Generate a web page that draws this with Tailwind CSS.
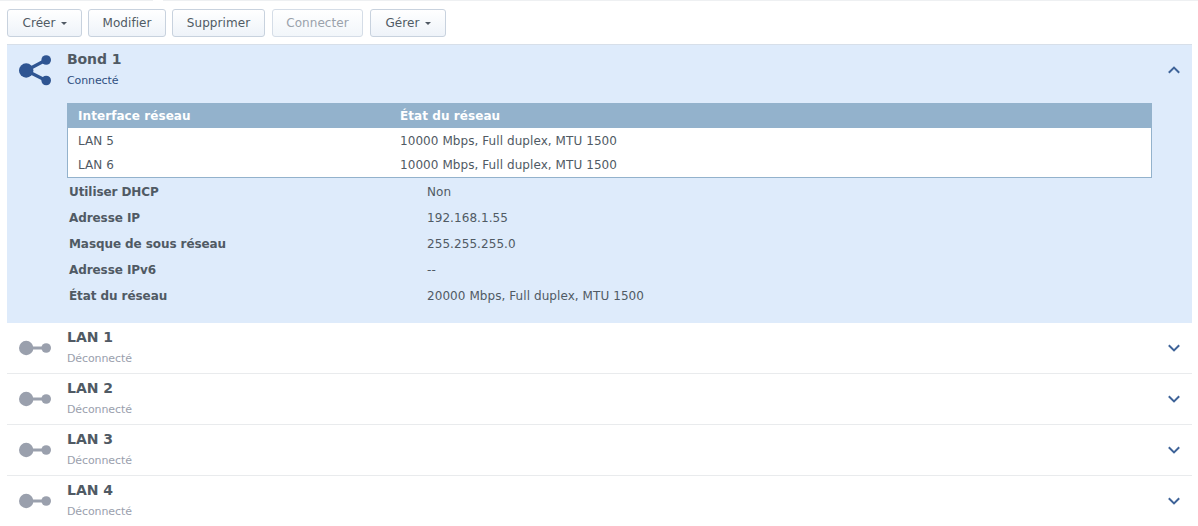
<!DOCTYPE html>
<html lang="fr">
<head>
<meta charset="UTF-8">
<title>Réseau</title>
<script src="https://cdn.jsdelivr.net/npm/@tailwindcss/browser@4"></script>
</head>
<body class="bg-white h-[526px] overflow-hidden font-['DejaVu_Sans',sans-serif] text-[12px] tracking-[0.07px] text-[#505a64]">
<div class="flex gap-[10px] h-px">
  <div class="w-[153px] bg-[#eef0f2]"></div>
  <div class="flex-1 bg-[#eef0f2]"></div>
</div>
<!-- toolbar -->
<div class="flex pl-[7px] pt-[8px] h-[43px]">
  <button class="h-[28px] w-[75px] mr-[6px] rounded-[3px] border border-[#c8d2de] bg-gradient-to-b from-white to-[#eef3f9] flex items-center justify-center gap-[5px]">Créer <span class="border-x-[3px] border-t-[3px] border-x-transparent border-t-[#505a64]"></span></button>
  <button class="h-[28px] w-[78px] mr-[6px] rounded-[3px] border border-[#c8d2de] bg-gradient-to-b from-white to-[#eef3f9]">Modifier</button>
  <button class="h-[28px] w-[93px] mr-[7px] rounded-[3px] border border-[#c8d2de] bg-gradient-to-b from-white to-[#eef3f9]">Supprimer</button>
  <button class="h-[28px] w-[91px] mr-[7px] rounded-[3px] border border-[#d5dde7] bg-gradient-to-b from-white to-[#f2f6fa] text-[#9aa2ab]">Connecter</button>
  <button class="h-[28px] w-[76px] rounded-[3px] border border-[#c8d2de] bg-gradient-to-b from-white to-[#eef3f9] flex items-center justify-center gap-[5px]">Gérer <span class="border-x-[3px] border-t-[3px] border-x-transparent border-t-[#505a64]"></span></button>
</div>
<div class="ml-[7px] mr-[6px]">
  <!-- Bond 1 -->
  <section class="bg-[#deebfb] border-t border-[#d7dfe9] h-[279px] relative pl-[60px]">
    <svg class="absolute left-[12px] top-[10px]" width="33" height="32" viewBox="0 0 33 32"><path d="M7.200 15.500 L27 5 M7.200 15.500 L27 25.500" stroke="#2f5592" stroke-width="3.2"/><circle cx="7.200" cy="15.500" r="7.200" fill="#2f5592"/><circle cx="27.200" cy="5" r="4.800" fill="#2f5592"/><circle cx="27.200" cy="25.500" r="4.800" fill="#2f5592"/></svg>
    <svg class="absolute right-[12px] top-[21px]" width="12" height="8" viewBox="0 0 12 8"><path d="M0.800 6.800 L6 1.600 L11.200 6.800" fill="none" stroke="#3e6398" stroke-width="2"/></svg>
    <h2 class="pt-[5px] h-[26px] font-bold text-[14px] leading-[18px] tracking-[-0.1px] text-[#505a64]">Bond 1</h2>
    <p class="text-[11px] leading-[14px] mt-[3px] tracking-[-0.1px] text-[#2f4f80]">Connecté</p>
    <div class="mt-[15px] w-[1085px] border border-[#93b2cc] bg-white">
      <div class="flex h-[25px] items-center bg-[#93b2cc] text-white font-bold -mt-px"><span class="pl-[10px] w-[332px]">Interface réseau</span><span>État du réseau</span></div>
      <div class="flex h-[25px] items-center"><span class="pl-[10px] w-[332px]">LAN 5</span><span>10000 Mbps, Full duplex, MTU 1500</span></div>
      <div class="flex h-[24px] items-center"><span class="pl-[10px] w-[332px]">LAN 6</span><span>10000 Mbps, Full duplex, MTU 1500</span></div>
    </div>
    <dl class="pl-[2px] pt-[1px]">
      <div class="flex h-[26px] items-center"><dt class="w-[358px] font-bold tracking-[-0.08px]">Utiliser DHCP</dt><dd>Non</dd></div>
      <div class="flex h-[26px] items-center"><dt class="w-[358px] font-bold tracking-[-0.08px]">Adresse IP</dt><dd>192.168.1.55</dd></div>
      <div class="flex h-[26px] items-center"><dt class="w-[358px] font-bold tracking-[-0.08px]">Masque de sous réseau</dt><dd>255.255.255.0</dd></div>
      <div class="flex h-[26px] items-center"><dt class="w-[358px] font-bold tracking-[-0.08px]">Adresse IPv6</dt><dd>--</dd></div>
      <div class="flex h-[26px] items-center"><dt class="w-[358px] font-bold tracking-[-0.08px]">État du réseau</dt><dd>20000 Mbps, Full duplex, MTU 1500</dd></div>
    </dl>
  </section>
  <!-- LAN rows -->
  <section class="h-[51px] border-b border-[#e9ebed] relative pl-[60px]">
    <svg class="absolute left-[12px] top-[17px]" width="33" height="16" viewBox="0 0 33 16"><path d="M7 8 H27" stroke="#9aa0ad" stroke-width="3"/><circle cx="7.200" cy="8" r="7.200" fill="#9aa0ad"/><circle cx="27.200" cy="8" r="4.800" fill="#9aa0ad"/></svg>
    <svg class="absolute right-[12px] top-[21px]" width="12" height="8" viewBox="0 0 12 8"><path d="M0.800 1.200 L6 6.400 L11.200 1.200" fill="none" stroke="#3e6398" stroke-width="2"/></svg>
    <h2 class="pt-[5px] h-[26px] font-bold text-[14px] leading-[18px] tracking-normal">LAN 1</h2>
    <p class="text-[11px] leading-[14px] mt-[3px] tracking-[-0.1px] text-[#9aa0ad]">Déconnecté</p>
  </section>
  <section class="h-[51px] border-b border-[#e9ebed] relative pl-[60px]">
    <svg class="absolute left-[12px] top-[17px]" width="33" height="16" viewBox="0 0 33 16"><path d="M7 8 H27" stroke="#9aa0ad" stroke-width="3"/><circle cx="7.200" cy="8" r="7.200" fill="#9aa0ad"/><circle cx="27.200" cy="8" r="4.800" fill="#9aa0ad"/></svg>
    <svg class="absolute right-[12px] top-[21px]" width="12" height="8" viewBox="0 0 12 8"><path d="M0.800 1.200 L6 6.400 L11.200 1.200" fill="none" stroke="#3e6398" stroke-width="2"/></svg>
    <h2 class="pt-[5px] h-[26px] font-bold text-[14px] leading-[18px] tracking-normal">LAN 2</h2>
    <p class="text-[11px] leading-[14px] mt-[3px] tracking-[-0.1px] text-[#9aa0ad]">Déconnecté</p>
  </section>
  <section class="h-[51px] border-b border-[#e9ebed] relative pl-[60px]">
    <svg class="absolute left-[12px] top-[17px]" width="33" height="16" viewBox="0 0 33 16"><path d="M7 8 H27" stroke="#9aa0ad" stroke-width="3"/><circle cx="7.200" cy="8" r="7.200" fill="#9aa0ad"/><circle cx="27.200" cy="8" r="4.800" fill="#9aa0ad"/></svg>
    <svg class="absolute right-[12px] top-[21px]" width="12" height="8" viewBox="0 0 12 8"><path d="M0.800 1.200 L6 6.400 L11.200 1.200" fill="none" stroke="#3e6398" stroke-width="2"/></svg>
    <h2 class="pt-[5px] h-[26px] font-bold text-[14px] leading-[18px] tracking-normal">LAN 3</h2>
    <p class="text-[11px] leading-[14px] mt-[3px] tracking-[-0.1px] text-[#9aa0ad]">Déconnecté</p>
  </section>
  <section class="h-[51px] relative pl-[60px]">
    <svg class="absolute left-[12px] top-[17px]" width="33" height="16" viewBox="0 0 33 16"><path d="M7 8 H27" stroke="#9aa0ad" stroke-width="3"/><circle cx="7.200" cy="8" r="7.200" fill="#9aa0ad"/><circle cx="27.200" cy="8" r="4.800" fill="#9aa0ad"/></svg>
    <svg class="absolute right-[12px] top-[21px]" width="12" height="8" viewBox="0 0 12 8"><path d="M0.800 1.200 L6 6.400 L11.200 1.200" fill="none" stroke="#3e6398" stroke-width="2"/></svg>
    <h2 class="pt-[5px] h-[26px] font-bold text-[14px] leading-[18px] tracking-normal">LAN 4</h2>
    <p class="text-[11px] leading-[14px] mt-[3px] tracking-[-0.1px] text-[#9aa0ad]">Déconnecté</p>
  </section>
</div>
</body>
</html>
